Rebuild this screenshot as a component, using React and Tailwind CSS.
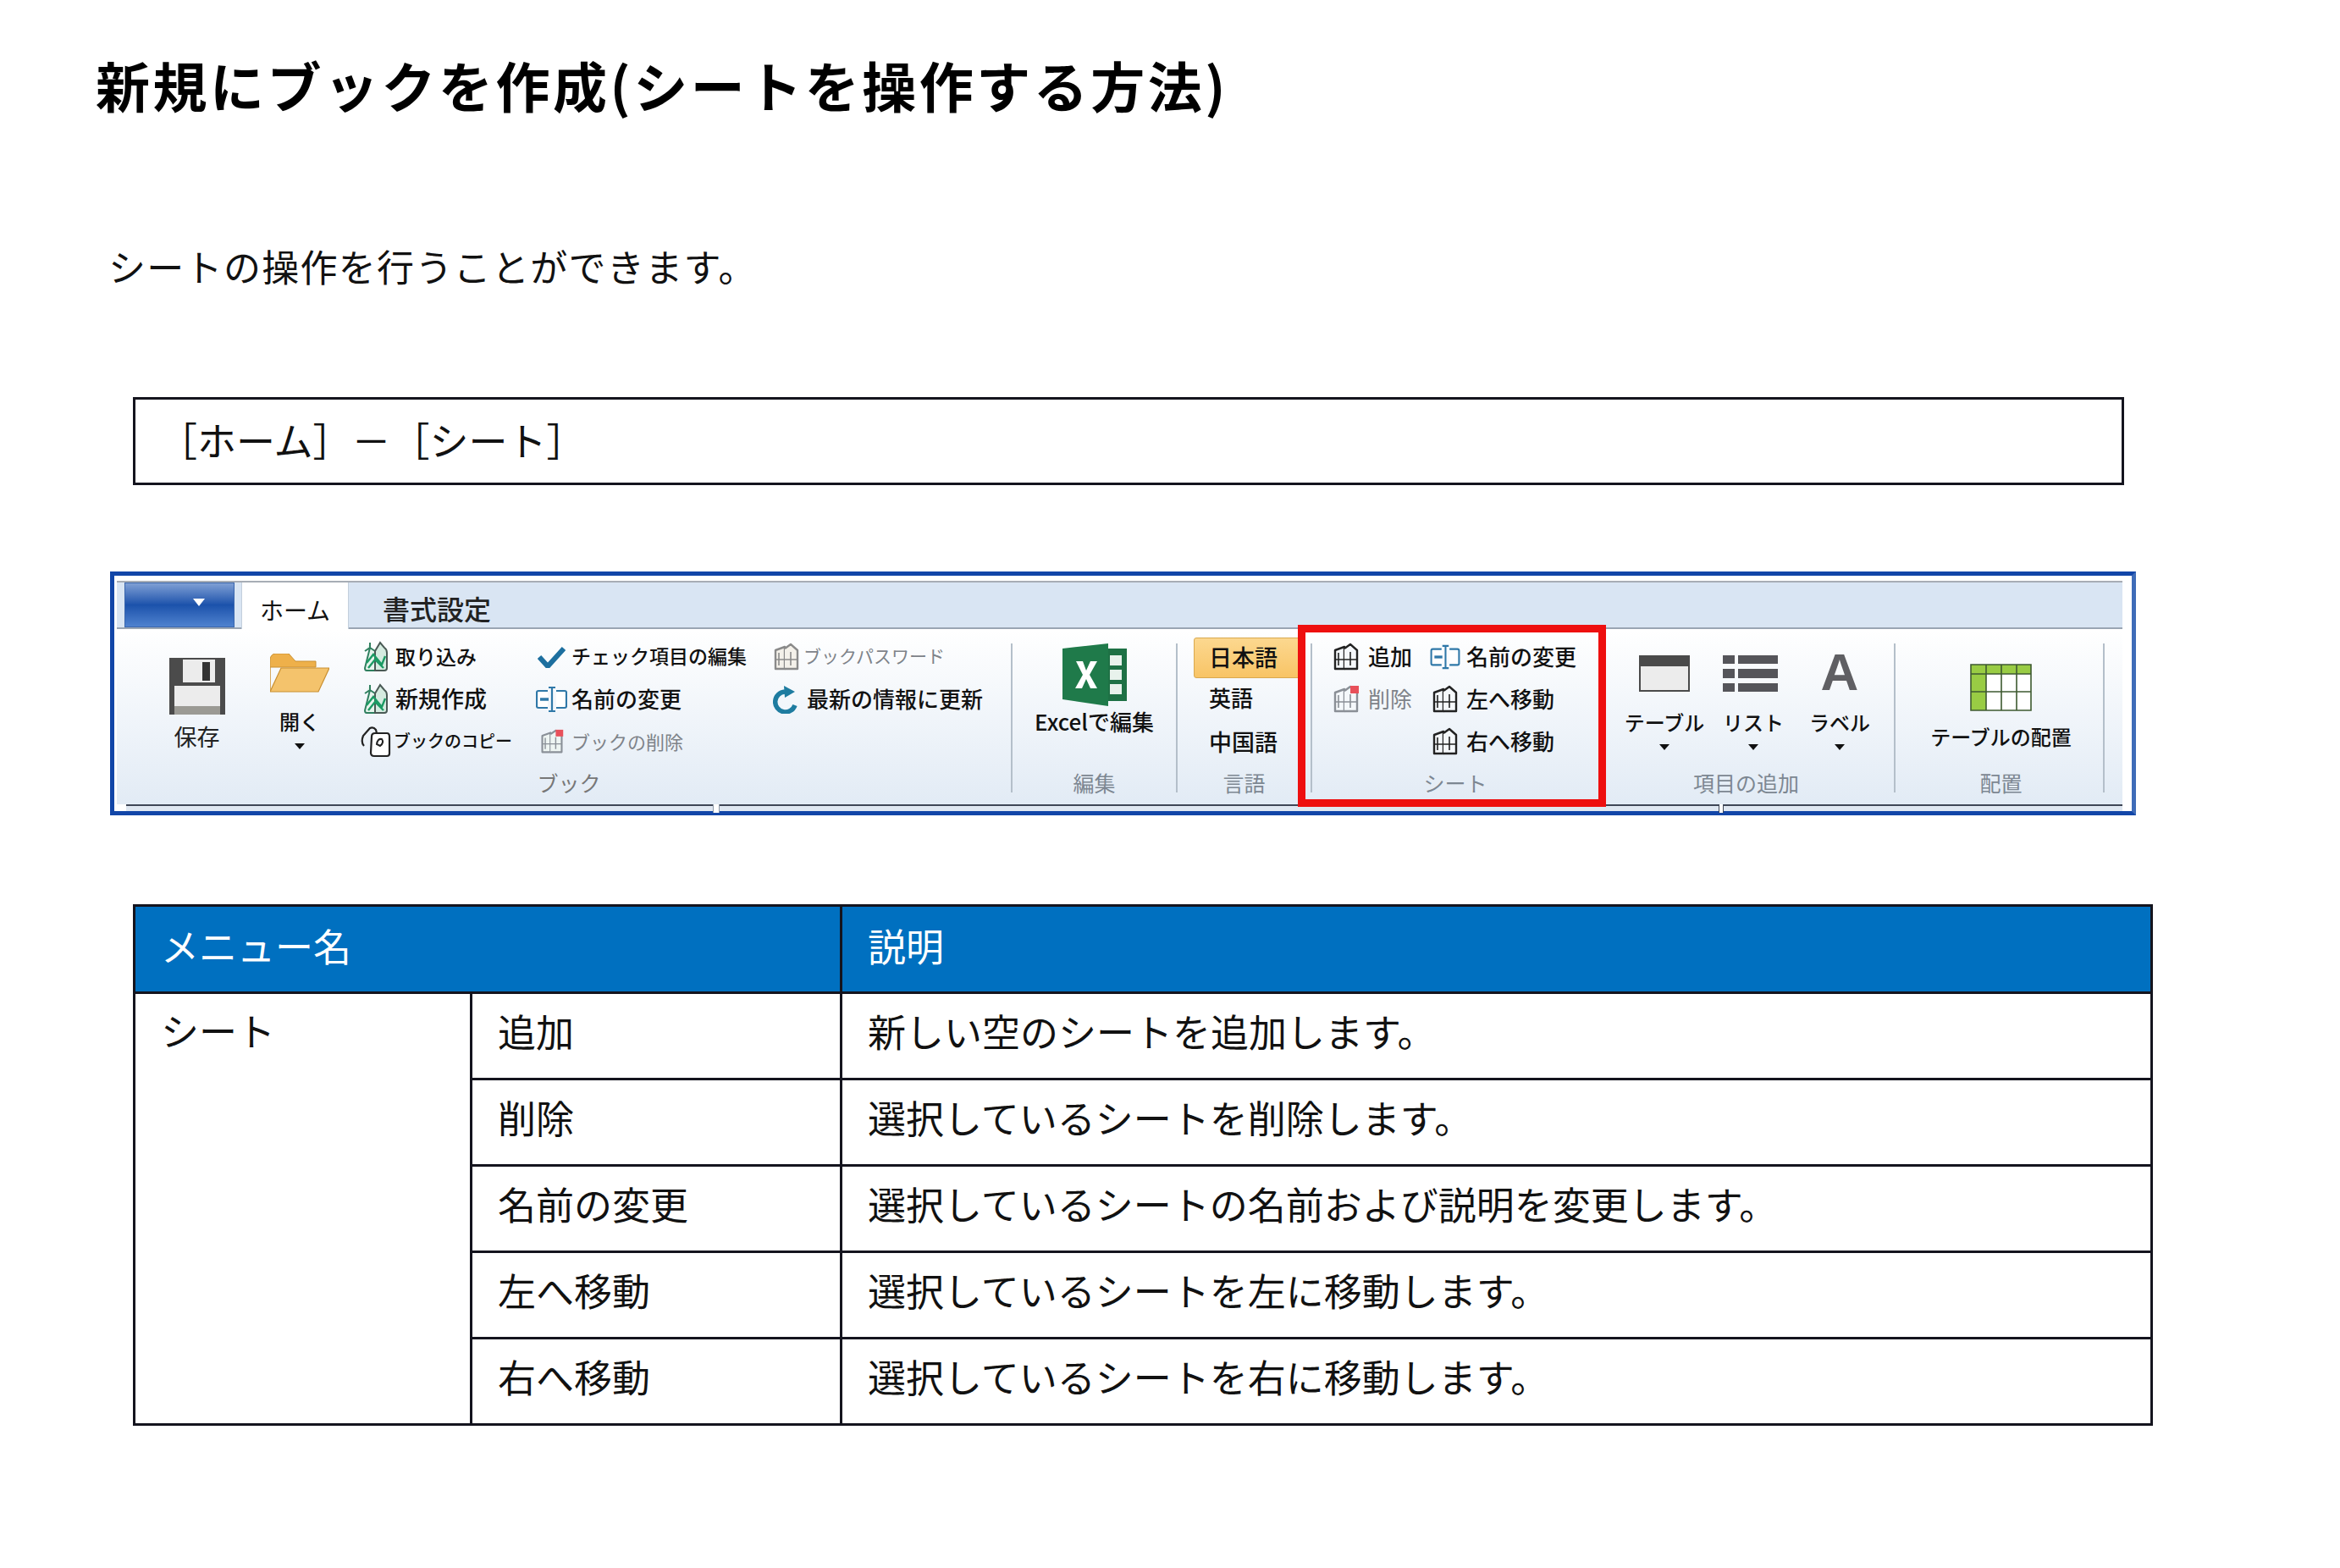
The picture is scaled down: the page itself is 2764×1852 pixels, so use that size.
const Book = ({ c = "#222", fill = "none", accent, w = 34, h = 36 }) => (
  <svg width={w} height={h} viewBox="0 0 34 36" className="shrink-0">
    <path d="M4 10 L15 6 L15 32 L4 32 Z" fill={fill} stroke={c} strokeWidth="2.4" strokeLinejoin="round" />
    <path d="M15 8 L22 3 L30 10 L30 32 L15 32" fill={fill} stroke={c} strokeWidth="2.4" strokeLinejoin="round" />
    <path d="M8 13 V28 M22 12 V28 M4 21 H30" stroke={c} strokeWidth="1.6" fill="none" />
    {accent && <rect x="22" y="2" width="10" height="9" fill={accent} />}
  </svg>
);

const GreenBook = () => (
  <svg width="30" height="38" viewBox="0 0 30 38" className="shrink-0">
    <path d="M2 12 L8 8 L8 2 M8 8 L14 12 V35 H4 Q2 35 2 32 Z" fill="#e6f4ec" stroke="#2f7f5f" strokeWidth="2" />
    <path d="M14 12 L20 2 L25 8 Q28 10 28 14 V32 Q28 35 25 35 H14 Z" fill="#d5ebe0" stroke="#4a5a55" strokeWidth="2" />
    <path d="M4 26 L12 16 L22 28 L26 18 M6 32 L14 22 L24 32" stroke="#1b9a63" strokeWidth="2.4" fill="none" />
  </svg>
);

const CopyIcon = () => (
  <svg width="38" height="38" viewBox="0 0 38 38" className="shrink-0">
    <path d="M5 24 Q1 20 4 12 L12 3 Q16 1 19 5 L20 9" fill="none" stroke="#222" strokeWidth="2.2" />
    <path d="M14 13 Q14 9 18 9 H32 Q35 9 35 13 V33 Q35 36 32 36 H17 Q13 36 13 32 Z" fill="#fff" stroke="#222" strokeWidth="2.2" />
    <path d="M20 22 Q21 15 26 16 Q29 20 24 24 Z" fill="none" stroke="#222" strokeWidth="2" />
  </svg>
);

const RenameIcon = ({ w = 37, h = 32 }) => (
  <svg width={w} height={h} viewBox="0 0 37 32" className="shrink-0">
    <path d="M14 6 H3 Q1 6 1 8 V24 Q1 26 3 26 H14" fill="#fff" stroke="#2f78a8" strokeWidth="2.2" />
    <path d="M24 6 H34 Q36 6 36 8 V24 Q36 26 34 26 H24" fill="#fff" stroke="#2f78a8" strokeWidth="2.2" />
    <path d="M19 2 V30 M15 2 H23 M15 30 H23" stroke="#2f78a8" strokeWidth="2.2" fill="none" />
    <path d="M5 16 H15" stroke="#2f78a8" strokeWidth="3.5" />
  </svg>
);

const Refresh = () => (
  <svg width="32" height="34" viewBox="0 0 32 34" className="shrink-0">
    <path d="M26 24 A12 12 0 1 1 14 8" fill="none" stroke="#1e7ca0" strokeWidth="5.5" />
    <path d="M13 1 L26 8 L14 15 Z" fill="#1e7ca0" />
  </svg>
);

const Save = () => (
  <svg width="66" height="67" viewBox="0 0 66 67" className="block">
    <path d="M0 0 H66 V67 H0 Z" fill="#4b4b4b" />
    <rect x="16" y="2" width="38" height="27" fill="#ececec" />
    <rect x="39" y="5" width="9" height="22" fill="#333" />
    <rect x="6" y="33" width="54" height="34" fill="#ececec" />
    <rect x="6" y="57" width="54" height="10" fill="#9b9a94" />
  </svg>
);

const Folder = () => (
  <svg width="70" height="46" viewBox="0 0 70 46" className="block">
    <path d="M0 44 V8 Q0 1 6 0 H22 L30 9 H54 V16 H0 Z" fill="#eeb04a" stroke="#c98f31" strokeWidth="1" />
    <path d="M0 45 L13 17 H70 L57 45 Z" fill="#f4c36c" stroke="#c98f31" strokeWidth="1.2" />
  </svg>
);

const Excel = () => (
  <svg width="76" height="74" viewBox="0 0 76 74" className="block">
    <rect x="50" y="6" width="26" height="62" fill="#1e7145" />
    <path d="M56 14 H70 V26 H56 Z M56 31 H70 V43 H56 Z M56 48 H70 V60 H56 Z" fill="#e8f2ec" />
    <path d="M0 6 L54 0 V74 L0 66 Z" fill="#1f7a4a" />
    <path d="M16 21 H24 L28 32 L33 21 H41 L32 37 L41 53 H33 L28 42 L23 53 H15 L24 37 Z" fill="#fff" />
  </svg>
);

const TableIcon = () => (
  <svg width="60" height="43" viewBox="0 0 60 43" className="block">
    <rect x="1" y="1" width="58" height="41" fill="#ececec" stroke="#4a4a4a" strokeWidth="2" />
    <rect x="1" y="1" width="58" height="12" fill="#4a4a4a" />
  </svg>
);

const ListIcon = () => (
  <svg width="65" height="43" viewBox="0 0 65 43" className="block mr-[8px]">
    <path d="M0 0 H14 V10 H0 Z M18 0 H65 V10 H18 Z M0 16 H14 V27 H0 Z M18 16 H65 V27 H18 Z M0 33 H14 V43 H0 Z M18 33 H65 V43 H18 Z" fill="#55555a" />
  </svg>
);

const LayoutIcon = () => (
  <svg width="73" height="56" viewBox="0 0 73 56" className="block">
    <rect x="1" y="1" width="71" height="54" fill="#fff" />
    <rect x="1" y="1" width="71" height="11" fill="#99cc44" />
    <rect x="1" y="1" width="18" height="54" fill="#99cc44" />
    <path d="M1 1 H72 V55 H1 Z M19 1 V55 M37 1 V55 M55 1 V55 M1 12 H72 M1 33 H72" fill="none" stroke="#3e5a30" strokeWidth="1.6" />
  </svg>
);

const Row = ({ icon, text, size = "text-[26px]", color = "text-[#111] font-medium", gap = "gap-[8px]", w = "w-[37px]" }) => (
  <div className={`h-[50px] flex items-center ${gap}`}>
    <div className={`${w} shrink-0 flex justify-center items-center`}>{icon}</div>
    <span className={`whitespace-nowrap leading-none mt-[-3px] ${size} ${color}`}>{text}</span>
  </div>
);

const Dot = () => <div className="mt-[11px] w-0 h-0 border-x-[6px] border-x-transparent border-t-[7px] border-t-[#111]" />;

const Sep = () => <div className="w-[2px] h-[176px] mt-[9px] bg-[#b4bfca] shrink-0" />;

const Group = ({ className, label, children, content = "" }) => (
  <div className={`flex flex-col shrink-0 ${className}`}>
    <div className={`h-[156px] flex ${content}`}>{children}</div>
    <div className="h-[30px] pt-[4px] flex items-center justify-center text-[25px] leading-none text-[#7d8792] whitespace-nowrap">{label}</div>
  </div>
);

const headCell = "border-[3px] border-[#14141e] bg-[#0070c0] text-white font-normal text-left align-middle pb-[10px]";
const cell = "border-[3px] border-[#14141e] pb-[12px] align-middle h-[102px]";

const rows = [
  ["追加", "新しい空のシートを追加します。"],
  ["削除", "選択しているシートを削除します。"],
  ["名前の変更", "選択しているシートの名前および説明を変更します。"],
  ["左へ移動", "選択しているシートを左に移動します。"],
  ["右へ移動", "選択しているシートを右に移動します。"],
];

export default function App() {
  return (
    <div className="w-[2764px] h-[1852px] bg-white text-[#111] font-['Noto_Sans_CJK_JP',sans-serif] overflow-hidden">
      <h1 className="ml-[113px] pt-[59px] h-[142px] text-[64px] leading-[80px] font-bold tracking-[3.5px] text-black whitespace-nowrap">
        新規にブックを作成(シートを操作する方法)
      </h1>
      <p className="ml-[128px] mt-[142px] text-[44px] leading-[60px] tracking-[1.3px] whitespace-nowrap">シートの操作を行うことができます。</p>

      <div className="ml-[157px] mt-[125px] w-[2352px] h-[104px] border-[3px] border-[#14141e] pl-[27px] pb-[6px] flex items-center text-[46px] leading-none">
        ［ホーム］－［シート］
      </div>

      <div className="relative ml-[130px] mt-[102px] w-[2393px] h-[288px] border-y-[5px] border-l-[5px] border-r-[5px] border-[#1246a8] border-r-[#3f6cb8] bg-white">
        <div className="ml-[3px] mr-[11px] mt-[6px] flex flex-col">
          <div className="h-[57px] border-t-2 border-t-[#a7adb5] border-b-2 border-b-[#9aa5b3] bg-[#d9e5f3] flex items-start">
            <div className="ml-[9px] w-[130px] h-[53px] border border-[#3a66ad] bg-gradient-to-b from-[#7f9fd4] via-[#1b52ab] to-[#4f82cf] flex items-center justify-center">
              <div className="ml-[46px] mt-[-6px] w-0 h-0 border-x-[7px] border-x-transparent border-t-[9px] border-t-white" />
            </div>
            <div className="ml-[8px] w-[127px] h-[55px] bg-white border-x border-x-[#c3cfdc] flex items-center justify-center text-[28px] leading-none text-[#111] pt-[8px]">ホーム</div>
            <div className="ml-[40px] h-[55px] flex items-center text-[32px] leading-none text-[#222] pt-[5px] font-medium">書式設定</div>
          </div>

          <div className="h-[207px] pt-[8px] flex bg-gradient-to-b from-white to-[#e2ebf5]">
            <Group className="w-[1056px]" label={<span className="ml-[12px] text-[#777]">ブック</span>}>
              <div className="ml-[47px] w-[95px] flex flex-col items-center pt-[26px] shrink-0">
                <Save />
                <div className="mt-[11px] text-[27px] leading-[30px] text-[#222]">保存</div>
              </div>
              <div className="ml-[15px] w-[118px] flex flex-col items-center pt-[21px] shrink-0">
                <Folder />
                <div className="mt-[19px] text-[24px] leading-[30px] text-[#111] font-medium">開く</div>
                <Dot />
              </div>
              <div className="ml-[12px] w-[208px] shrink-0">
                <Row w="w-[38px]" gap="gap-[4px]" size="text-[24px]" icon={<GreenBook />} text="取り込み" />
                <Row w="w-[38px]" gap="gap-[4px]" size="text-[27px]" icon={<GreenBook />} text="新規作成" />
                <Row w="w-[38px]" gap="gap-[2px]" size="text-[20px]" icon={<CopyIcon />} text="ブックのコピー" />
              </div>
              <div className="w-[279px] shrink-0">
                <Row gap="gap-[5px]" size="text-[23px]" text="チェック項目の編集" icon={
                  <svg width="33" height="26" viewBox="0 0 33 26"><path d="M2 13 L12 24 L31 3" fill="none" stroke="#1d6f9f" strokeWidth="6" /></svg>
                } />
                <Row gap="gap-[5px]" icon={<RenameIcon />} text="名前の変更" />
                <Row gap="gap-[5px]" size="text-[22px]" color="text-[#7e8389]" icon={<Book c="#8a9098" fill="#eef5f3" accent="#e8505a" w={30} h={34} />} text="ブックの削除" />
              </div>
              <div className="w-[282px] shrink-0">
                <Row w="w-[33px]" gap="gap-[4px]" size="text-[21px]" color="text-[#7e8389]" icon={<Book c="#8a8a8a" fill="#f4f1ea" />} text="ブックパスワード" />
                <Row w="w-[33px]" icon={<Refresh />} text="最新の情報に更新" />
              </div>
            </Group>
            <Sep />
            <Group className="w-[193px]" label="編集">
              <div className="w-full flex flex-col items-center pt-[9px]">
                <Excel />
                <div className="mt-[3px] text-[26px] leading-[30px] text-[#111] font-medium whitespace-nowrap">Excelで編集</div>
              </div>
            </Group>
            <Sep />
            <Group className="w-[157px]" label="言語" content="flex-col">
              <div className="ml-[19px] w-[130px] h-[48px] mt-[2px] pb-[4px] bg-gradient-to-b from-[#fcd88f] to-[#f8c465] border border-[#d9a94f] rounded-[3px] pl-[17px] flex items-center text-[27px] leading-none text-[#111] font-medium">日本語</div>
              <div className="ml-[37px] h-[52px] pb-[6px] flex items-center text-[26px] leading-none text-[#111] font-medium">英語</div>
              <div className="ml-[37px] h-[52px] pb-[8px] flex items-center text-[27px] leading-none text-[#111] font-medium">中国語</div>
            </Group>
            <Sep />
            <Group className="w-[338px]" label="シート">
              <div className="ml-[23px] w-[116px] shrink-0">
                <Row w="w-[33px]" gap="gap-[10px]" icon={<Book c="#222" fill="#f5f8fb" />} text="追加" />
                <Row w="w-[33px]" gap="gap-[10px]" color="text-[#7e8389]" icon={<Book c="#8a8f96" fill="#f5f8fb" accent="#e8505a" />} text="削除" />
              </div>
              <div className="shrink-0">
                <Row w="w-[36px]" gap="gap-[7px]" icon={<RenameIcon w={36} h={30} />} text="名前の変更" />
                <Row w="w-[36px]" gap="gap-[7px]" icon={<Book c="#222" fill="#f5f8fb" />} text="左へ移動" />
                <Row w="w-[36px]" gap="gap-[7px]" icon={<Book c="#222" fill="#f5f8fb" />} text="右へ移動" />
              </div>
            </Group>
            <Group className="w-[349px]" label="項目の追加">
              <div className="ml-[33px] w-[90px] shrink-0 flex flex-col items-center pt-[23px]">
                <TableIcon />
                <div className="mt-[21px] text-[24px] leading-[30px] text-[#111] font-medium whitespace-nowrap">テーブル</div>
                <Dot />
              </div>
              <div className="ml-[15px] w-[90px] shrink-0 flex flex-col items-center pt-[23px]">
                <ListIcon />
                <div className="mt-[21px] text-[24px] leading-[30px] text-[#111] font-medium whitespace-nowrap">リスト</div>
                <Dot />
              </div>
              <div className="ml-[12px] w-[90px] shrink-0 flex flex-col items-center pt-[19px]">
                <span className="h-[47px] flex items-center text-[62px] leading-none font-bold text-[#5f5f63] font-['Liberation_Sans',sans-serif]">A</span>
                <div className="mt-[21px] text-[24px] leading-[30px] text-[#111] font-medium whitespace-nowrap">ラベル</div>
                <Dot />
              </div>
            </Group>
            <Sep />
            <Group className="w-[245px]" label={<span className="ml-[4px]">配置</span>}>
              <div className="w-full pl-[4px] flex flex-col items-center pt-[33px]">
                <LayoutIcon />
                <div className="mt-[15px] text-[24px] leading-[30px] text-[#111] font-medium whitespace-nowrap">テーブルの配置</div>
              </div>
            </Group>
            <Sep />
          </div>
          <div className="relative h-[8px] ml-[11px] border-t-[2px] border-t-[#3f4656] bg-[#dfe7f1]">
            <div className="absolute left-[693px] top-[-2px] w-[8px] h-[10px] bg-white border-x border-[#8d98a6]" />
            <div className="absolute left-[1881px] top-[-2px] w-[6px] h-[10px] bg-white border-x border-[#3f4656]" />
          </div>
        </div>
        <div className="absolute left-[1398px] top-[58px] w-[364px] h-[215px] border-[9px] border-[#ee0f0f]" />
      </div>

      <table className="ml-[157px] mt-[105px] w-[2383px] table-fixed border-collapse text-[45px] leading-none text-[#111]">
        <colgroup>
          <col className="w-[398px]" />
          <col className="w-[437px]" />
          <col className="w-[1548px]" />
        </colgroup>
        <thead>
          <tr>
            <th colSpan={2} className={`${headCell} h-[103px] pl-[30px]`}>メニュー名</th>
            <th className={`${headCell} h-[103px] pl-[30px]`}>説明</th>
          </tr>
        </thead>
        <tbody>
          {rows.map((r, i) => (
            <tr key={r[0]}>
              {i === 0 && <td rowSpan={5} className="border-[3px] border-[#14141e] pl-[30px] pt-[20px] align-top">シート</td>}
              <td className={`${cell} pl-[30px]`}>{r[0]}</td>
              <td className={`${cell} pl-[30px]`}>{r[1]}</td>
            </tr>
          ))}
        </tbody>
      </table>
    </div>
  );
}
